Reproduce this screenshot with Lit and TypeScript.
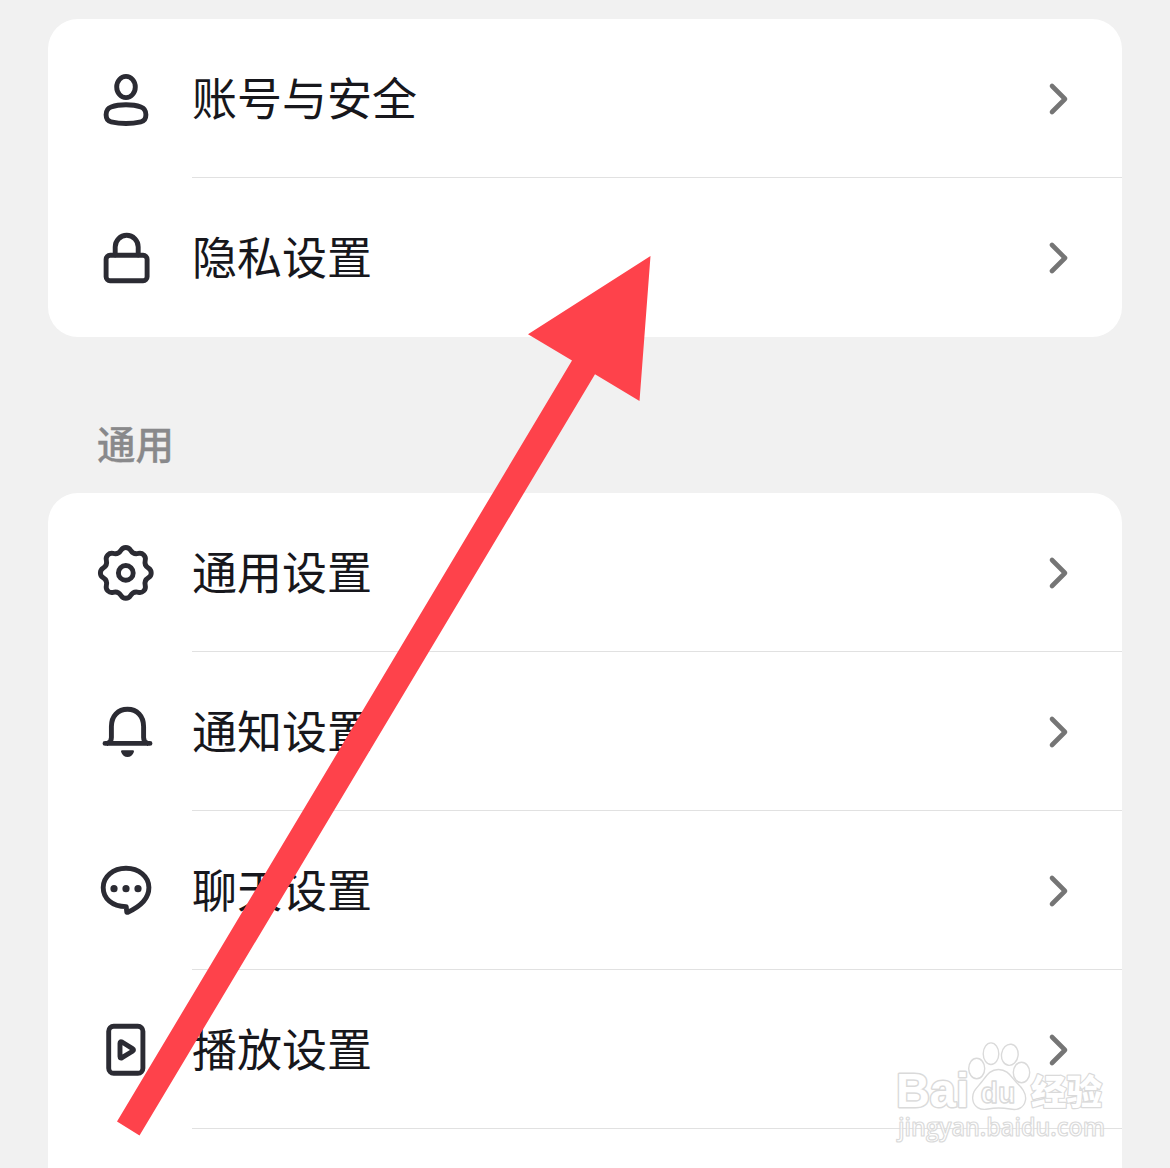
import { LitElement, html, svg, css } from "lit";
import type { SVGTemplateResult } from "lit";
import { customElement, property } from "lit/decorators.js";

// Outline of the gear: eight round lobes joined by smooth concave valleys.
function gearPath(cx: number, cy: number): string {
  const at = (radial: number, side: number, turn: number) => {
    const a = (turn * Math.PI) / 4;
    const x = cx + radial * Math.cos(a) - side * Math.sin(a);
    const y = cy + radial * Math.sin(a) + side * Math.cos(a);
    return `${x.toFixed(2)} ${y.toFixed(2)}`;
  };
  let d = `M${at(22.7, -4.8, 0)}`;
  for (let i = 0; i < 8; i++) {
    d += `A5.6 5.6 0 0 1 ${at(22.7, 4.8, i)}`;
    d += `Q${at(18.17, 7.52, i)} ${at(22.7, -4.8, i + 1)}`;
  }
  return d + "Z";
}

const icons: Record<string, SVGTemplateResult> = {
  user: svg`
    <ellipse cx="30" cy="19" rx="9.3" ry="10.6" />
    <path d="M10.1 46.8c0-4.2 1.5-6.6 5-7.8 8.2-3 21.600-3 29.800 0 3.500 1.200 5 3.600 5 7.800 0 4.400-1.500 6.300-5 7-8.600 2-21.200 2-29.800 0-3.500-.7-5-2.600-5-7z" />`,
  lock: svg`
    <rect x="10.1" y="28.3" width="41" height="25.4" rx="4" />
    <path d="M19.200 28V20a11.500 11.700 0 0 1 23 0v8" />`,
  gear: svg`
    <path d=${gearPath(29.8, 30.9)} />
    <circle cx="29.8" cy="30.9" r="7.4" />`,
  bell: svg`
    <path d="M9 42.400H54M11.500 42.400C14.200 41.500 15.400 39.500 15.400 36.500V25.500C15.400 15 22 8.300 31.500 8.300S47.600 15 47.600 25.500V36.500C47.600 39.500 48.800 41.500 51.500 42.400" />
    <path class="solid" d="M26 49.300H37Q38.400 49.400 37.900 51Q36 56 31.500 56T25.100 51Q24.600 49.400 26 49.300Z" />`,
  chat: svg`
    <path d="M30.200 46.600C16 46.600 7.200 38.500 7.200 27.500C7.200 16.500 17 8.300 30 8.300S52.900 16.500 52.900 27.500C52.900 38 44.500 46.500 31.400 52.400L30.800 52.300Z" />
    <circle class="solid" cx="18" cy="28.700" r="3.600" />
    <circle class="solid" cx="30" cy="28.700" r="3.600" />
    <circle class="solid" cx="42" cy="28.700" r="3.600" />`,
  play: svg`
    <rect x="12.700" y="7.300" width="34.200" height="47" rx="5" />
    <path d="M24 24.200Q24 22 26 23L36.500 29.600Q38.500 30.900 36.500 32.200L26 38.700Q24 39.700 24 37.500Z" />`,
};

@customElement("settings-row")
class SettingsRow extends LitElement {
  @property() icon = "";
  @property() label = "";

  static styles = css`
    :host {
      display: block;
      height: 159px;
    }
    .row {
      display: flex;
      box-sizing: border-box;
      height: 159px;
      padding-left: 48px;
    }
    .icon {
      flex: none;
      width: 60px;
      height: 60px;
      margin: 49px 36px 0 0;
      fill: none;
      stroke: #2b2b33;
      stroke-width: 4.9;
      stroke-linejoin: round;
      stroke-linecap: round;
    }
    .solid {
      fill: #2b2b33;
      stroke: none;
    }
    .body {
      flex: 1;
      display: flex;
      align-items: center;
      justify-content: space-between;
      box-sizing: border-box;
      padding-right: 52px;
      border-bottom: 1px solid #e1e1e1;
    }
    :host([last]) .body {
      border-bottom-color: transparent;
    }
    .label {
      font-size: 45px;
      line-height: 60px;
      margin-bottom: 2px;
      color: #17171c;
      white-space: nowrap;
    }
    .chevron {
      width: 22px;
      height: 34px;
      margin-top: 2px;
      fill: none;
      stroke: #757575;
      stroke-width: 4.600;
      stroke-linecap: round;
      stroke-linejoin: round;
    }
  `;

  render() {
    return html`
      <div class="row">
        <svg class="icon" viewBox="0 0 60 60">${icons[this.icon]}</svg>
        <div class="body">
          <span class="label">${this.label}</span>
          <svg class="chevron" viewBox="0 0 22 34"><path d="M4 4L17 17L4 30" /></svg>
        </div>
      </div>
    `;
  }
}

@customElement("app-root")
class AppRoot extends LitElement {
  static styles = css`
    :host {
      display: block;
      position: relative;
      height: 1168px;
      overflow: hidden;
      background: #f1f1f1;
      font-family: "Noto Sans CJK SC", sans-serif;
    }
    .page {
      display: flex;
      flex-direction: column;
      padding: 19px 48px 0;
    }
    .card {
      border-radius: 30px;
      background: #fff;
    }
    .heading {
      height: 156px;
      box-sizing: border-box;
      margin: 0;
      padding: 78px 0 0 49px;
      font-size: 38.5px;
      line-height: 54px;
      font-weight: 500;
      color: #89898b;
      -webkit-text-stroke: 0.3px #89898b;
    }
    .overlay {
      position: absolute;
      inset: 0;
      width: 1170px;
      height: 1168px;
      pointer-events: none;
    }
    .arrow {
      fill: #fe424b;
    }
    .mark {
      fill: #fff;
      stroke: #dadada;
      stroke-width: 1.4;
      stroke-linejoin: round;
    }
    .latin {
      font-family: "Liberation Sans", sans-serif;
    }
    .bold {
      font-weight: 700;
    }
    .outer {
      paint-order: stroke;
      stroke-width: 3;
    }
    .heavy {
      font-weight: 900;
      paint-order: stroke;
      stroke-width: 2.4;
    }
    .url {
      font-family: "Open Sans", sans-serif;
      font-weight: 600;
      fill-opacity: 0.7;
      stroke-width: 1.2;
    }
  `;

  render() {
    return html`
      <main class="page">
        <section class="card">
          <settings-row icon="user" label="账号与安全"></settings-row>
          <settings-row icon="lock" label="隐私设置" last></settings-row>
        </section>
        <h2 class="heading">通用</h2>
        <section class="card">
          <settings-row icon="gear" label="通用设置"></settings-row>
          <settings-row icon="bell" label="通知设置"></settings-row>
          <settings-row icon="chat" label="聊天设置"></settings-row>
          <settings-row icon="play" label="播放设置"></settings-row>
          <settings-row last></settings-row>
        </section>
      </main>
      <svg class="overlay" viewBox="0 0 1170 1168">
        <polygon class="arrow" points="650.500,256 528,334.300 572,360.500 117,1121.500 139.500,1135.500 595,374.300 639.500,401" />
        <g class="mark">
          <text class="latin bold outer" x="896" y="1107" font-size="48" textLength="73" lengthAdjust="spacingAndGlyphs">Bai</text>
          <ellipse cx="976.700" cy="1068.500" rx="8" ry="10.300" />
          <ellipse cx="991" cy="1053.700" rx="7.800" ry="10.800" />
          <ellipse cx="1009.800" cy="1054.800" rx="8.300" ry="10.600" transform="rotate(8 1009.800 1054.800)" />
          <ellipse cx="1021.500" cy="1072.500" rx="8.200" ry="10.300" />
          <path d="M998.500 1069.500C1008 1069.500 1011 1077 1017 1083C1023 1088.500 1026.500 1094 1025.500 1100C1024 1108.500 1017 1110.500 1010 1109C1001 1107.500 996 1107.500 988 1109C980 1110.500 973.500 1107 972.700 1099C972 1091 977 1088 982 1081.500C987 1075 990 1069.500 998.500 1069.500Z" />
          <text class="latin bold" x="980.500" y="1103" font-size="29" textLength="35" lengthAdjust="spacingAndGlyphs">du</text>
          <text class="heavy" x="1031" y="1105" font-size="35.500">经验</text>
          <text class="url" x="898" y="1135.500" font-size="24.500" textLength="207" lengthAdjust="spacingAndGlyphs">jingyan.baidu.com</text>
        </g>
      </svg>
    `;
  }
}
